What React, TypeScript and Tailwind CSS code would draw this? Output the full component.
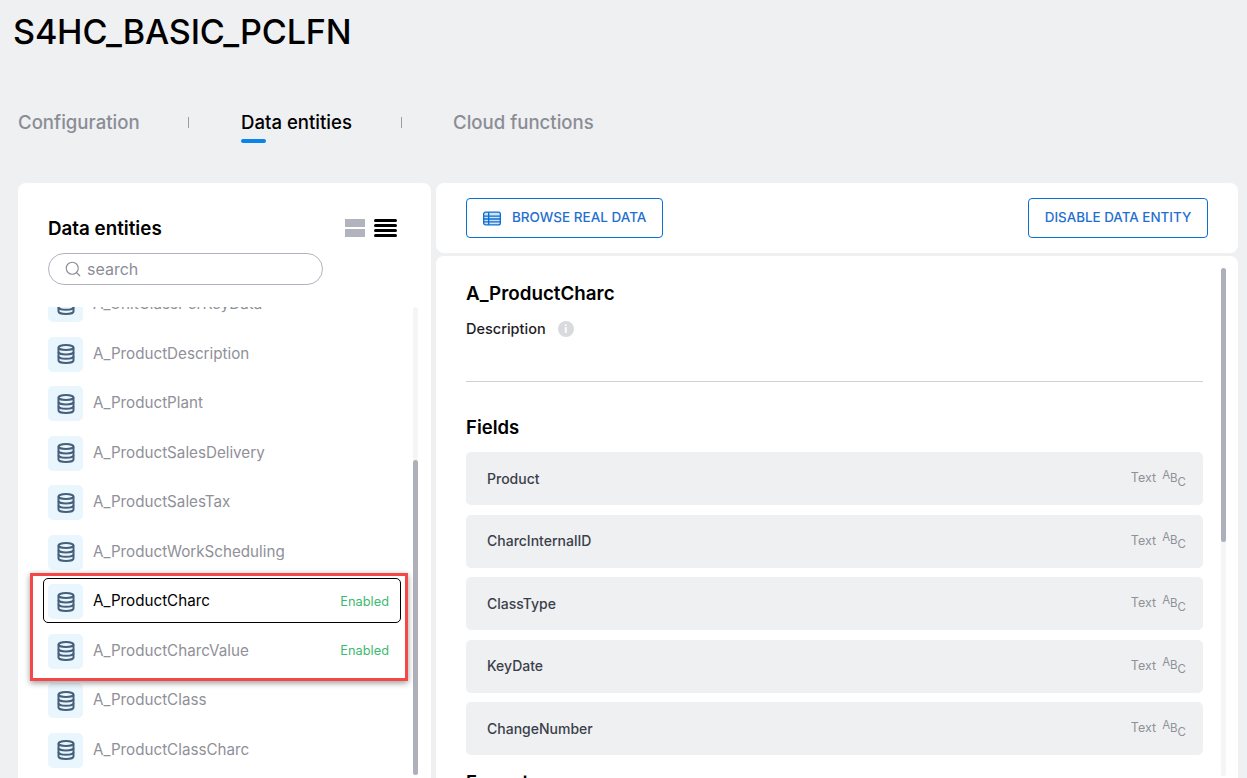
import { Search } from "lucide-react";

const font = "font-['Inter','Noto_Sans',sans-serif]";

const entities = [
  { name: "A_ProductDescription" },
  { name: "A_ProductPlant" },
  { name: "A_ProductSalesDelivery" },
  { name: "A_ProductSalesTax" },
  { name: "A_ProductWorkScheduling" },
  { name: "A_ProductCharc", enabled: true, selected: true },
  { name: "A_ProductCharcValue", enabled: true },
  { name: "A_ProductClass" },
  { name: "A_ProductClassCharc" },
];

const fields = ["Product", "CharcInternalID", "ClassType", "KeyDate", "ChangeNumber"];

function DbIcon() {
  return (
    <svg width="18" height="20" viewBox="0 0 18 20" fill="none" stroke="#46607c" strokeWidth="2">
      <ellipse cx="9" cy="3.5" rx="7.5" ry="2.5" />
      <path d="M1.5 3.5v13c0 1.4 3.4 2.5 7.5 2.5s7.5-1.1 7.5-2.5v-13" />
      <path d="M1.5 8c0 1.4 3.4 2.5 7.5 2.5s7.5-1.1 7.5-2.5" />
      <path d="M1.5 12.300c0 1.400 3.400 2.500 7.500 2.500s7.500-1.100 7.500-2.500" />
    </svg>
  );
}

function EntityRow({ name, enabled, selected }: { name: string; enabled?: boolean; selected?: boolean }) {
  return (
    <div className="relative flex h-[35px] shrink-0 items-center">
      {selected && (
        <div className="absolute left-[-5px] top-[-6px] h-[45px] w-[358px] rounded-[5px] border border-black" />
      )}
      <div className="flex h-[35px] w-[35px] shrink-0 items-center justify-center rounded-[5px] bg-[#eaf6fe]">
        <DbIcon />
      </div>
      <span className={`ml-[10px] text-[15.200px] ${selected ? "text-black" : "text-[#8f9098]"}`}>{name}</span>
      {enabled && <span className="ml-auto mr-[1px] text-[12.800px] text-[#3cba6f]">Enabled</span>}
    </div>
  );
}

function Scrollbar({ thumbTop, thumbHeight }: { thumbTop: string; thumbHeight: string }) {
  return (
    <div className={`relative w-[5px] shrink-0 rounded-full bg-[#f5f5f6]`}>
      <div className={`absolute left-0 w-[5px] rounded-full bg-[#adb0ba] ${thumbTop} ${thumbHeight}`} />
    </div>
  );
}

function FieldRow({ name }: { name: string }) {
  return (
    <div className="flex h-[53px] shrink-0 items-center justify-between rounded-[5px] bg-[#eff0f2] pl-[21px] pr-[17px]">
      <span className="mb-[1px] text-[14px] font-medium text-[#3b3f4a]">{name}</span>
      <span className="flex items-center text-[12.500px] text-[#8f9098]">
        Text
        <span className="ml-[6px] flex h-[24px] items-start text-[11.500px] text-[#8f9098]">
          <span>A</span>
          <span className="mt-[3px]">B</span>
          <span className="mt-[7px]">C</span>
        </span>
      </span>
    </div>
  );
}

export default function App() {
  return (
    <div className={`${font} flex h-[778px] w-[1247px] flex-col overflow-hidden bg-[#eff0f2]`}>
      {/* Header */}
      <h1 className="ml-[13px] mt-[13px] h-[38px] text-[34.200px] font-medium leading-[38px] tracking-[-0.2px] text-black">
        S4HC_BASIC_PCLFN
      </h1>

      {/* Tabs */}
      <div className="ml-[18px] mt-[59px] flex h-[34px] items-start text-[18.600px] font-medium leading-[24px] text-[#8b8d96]">
        <span className="w-[170px]">Configuration</span>
        <span className="mt-[7px] h-[11px] w-[1px] bg-[#9a9ca6]" />
        <div className="ml-[52px] w-[160px] text-black">
          Data entities
          <div className="mt-[5px] h-[4px] w-[25px] rounded-full bg-[#0a84e8]" />
        </div>
        <span className="mt-[7px] h-[11px] w-[1px] bg-[#9a9ca6]" />
        <span className="ml-[51px]">Cloud functions</span>
      </div>

      <div className="ml-[18px] mt-[39px] flex min-h-0 flex-1 gap-[5px]">
        {/* Left panel */}
        <div className="relative flex w-[413px] shrink-0 flex-col rounded-t-[8px] bg-white pl-[30px]">
          <div className="mt-[31px] flex h-[28px] items-center justify-between pr-[34px]">
            <span className="mt-[2px] text-[18.800px] font-semibold text-black">Data entities</span>
            <div className="flex gap-[9px]">
              <div className="flex w-[20px] flex-col gap-[2px]">
                <div className="h-[8px] bg-[#b1b3bf]" />
                <div className="h-[8px] bg-[#b1b3bf]" />
              </div>
              <div className="flex w-[23px] flex-col gap-[2.500px]">
                <div className="h-[2.500px] rounded-full bg-black" />
                <div className="h-[2.500px] rounded-full bg-black" />
                <div className="h-[2.500px] rounded-full bg-black" />
                <div className="h-[2.500px] rounded-full bg-black" />
              </div>
            </div>
          </div>
          <div className="mt-[11px] flex h-[32px] w-[275px] items-center rounded-full border border-[#b1b3bf] pl-[15px]">
            <Search size={18} strokeWidth={1.500} className="text-[#8b8d96]" />
            <span className="ml-[5px] text-[16px] text-[#8b8d96]">search</span>
          </div>
          <div className="mt-[22px] flex min-h-0 flex-1 pb-[3px]">
            <div className="relative ml-[-5px] min-w-0 flex-1 overflow-hidden pl-[5px]">
              <div className="mt-[-20px] flex flex-col gap-[14.500px] pr-[23px]">
                <div className="relative flex h-[35px] shrink-0 items-center">
                  <div className="flex h-[35px] w-[35px] items-center justify-center rounded-[5px] bg-[#eaf6fe]">
                    <DbIcon />
                  </div>
                  <span className="ml-[10px] text-[15.200px] text-[#8f9098]">A_UnitClassPerKeyData</span>
                </div>
                {entities.map((e) => (
                  <EntityRow key={e.name} name={e.name} enabled={e.enabled} selected={e.selected} />
                ))}
              </div>
            </div>
            <div className="mr-[13px] flex">
              <Scrollbar thumbTop="top-[153px]" thumbHeight="h-[315px]" />
            </div>
          </div>
          {/* Annotation rectangle */}
          <div className="absolute left-[12px] top-[390px] h-[108px] w-[378px] border-[3px] border-[#f44747] shadow-[0_2px_6px_rgba(0,0,0,0.4)]" />
        </div>

        {/* Right column */}
        <div className="flex w-[802px] shrink-0 flex-col gap-[3px]">
          <div className="flex h-[70px] shrink-0 items-center justify-between rounded-[8px] bg-white pl-[30px] pr-[30px]">
            <div className="flex h-[40px] w-[197px] items-center rounded-[4px] border border-[#0b6fd1] pl-[16px] text-[13.500px] font-medium text-[#1f6fd0]">
              <svg width="18" height="15" viewBox="0 0 19 15" fill="none">
                <rect x="0.700" y="0.700" width="17.600" height="13.600" rx="2" fill="#cfe2f6" stroke="#0b6fd1" strokeWidth="1.400" />
                <path d="M6 1v13M1 5h17M1 8h17M1 11h17" stroke="#0b6fd1" strokeWidth="1.400" />
              </svg>
              <span className="mb-[1px] ml-[11px]">BROWSE REAL DATA</span>
            </div>
            <div className="flex h-[40px] w-[180px] items-center justify-center rounded-[4px] border border-[#0b6fd1] pb-[1px] text-[13.400px] font-medium text-[#1f6fd0]">
              DISABLE DATA ENTITY
            </div>
          </div>

          <div className="flex min-h-0 flex-1 rounded-t-[8px] bg-white pl-[30px]">
            <div className="w-[737px] shrink-0 overflow-hidden">
              <div className="mt-[27px] text-[18.800px] font-semibold leading-[22px] text-black">A_ProductCharc</div>
              <div className="mt-[15px] flex items-center text-[14.500px] font-medium leading-[18px] text-[#1c1c1f]">
                Description
                <span className="ml-[12px] flex h-[16px] w-[16px] items-center justify-center rounded-full bg-[#d9dade] text-[11px] font-bold text-white">
                  i
                </span>
              </div>
              <div className="mt-[43px] h-[1px] bg-[#cfd0d4]" />
              <div className="mt-[34px] text-[18.500px] font-semibold leading-[22px] text-black">Fields</div>
              <div className="mt-[14px] flex flex-col gap-[9.500px]">
                {fields.map((f) => (
                  <FieldRow key={f} name={f} />
                ))}
              </div>
              <div className="mt-[16px] text-[18.500px] font-semibold leading-[22px] text-black">Formats</div>
            </div>
            <div className="ml-[18px] mt-[12px] flex pb-[2px]">
              <Scrollbar thumbTop="top-0" thumbHeight="h-[274px]" />
            </div>
          </div>
        </div>
      </div>
    </div>
  );
}
